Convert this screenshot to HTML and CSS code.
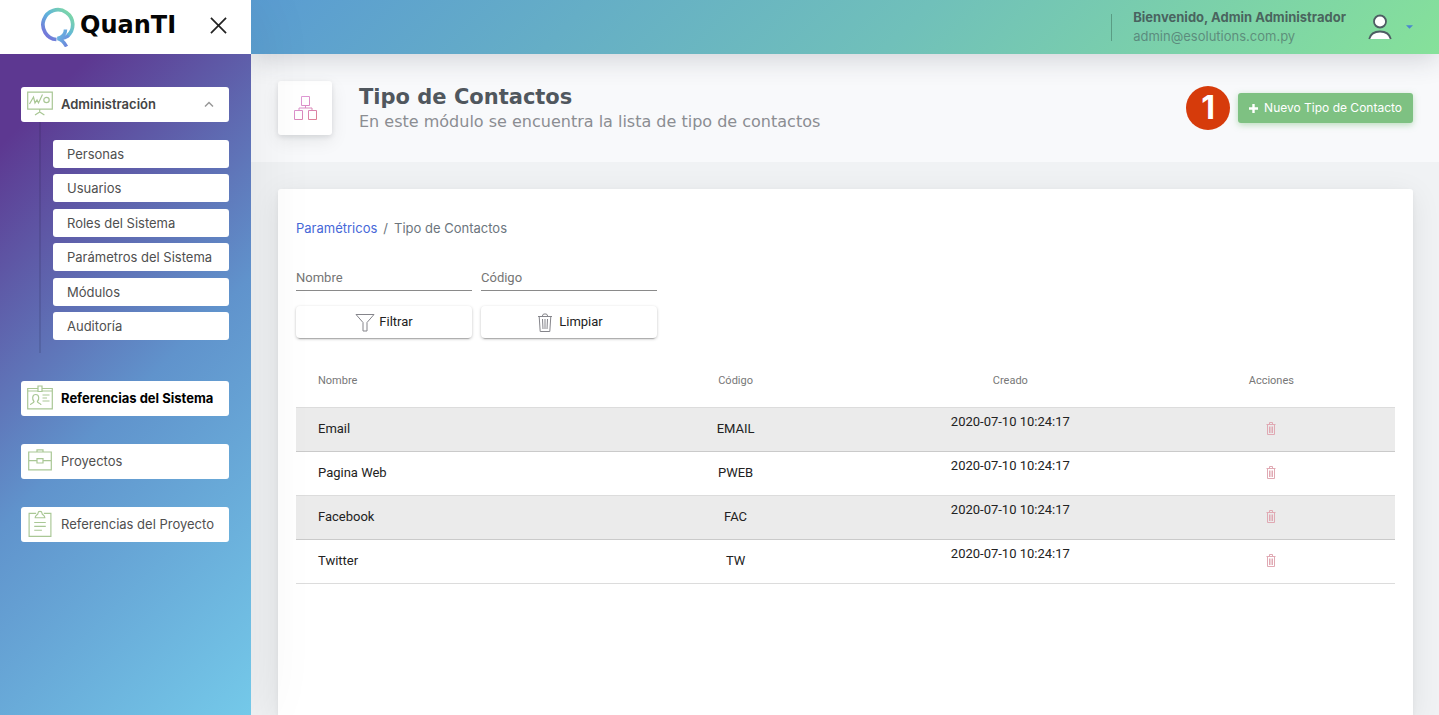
FILE: index.html
```html
<!DOCTYPE html>
<html lang="es">
<head>
<meta charset="utf-8">
<meta name="viewport" content="width=device-width, initial-scale=1">
<title>Tipo de Contactos</title>
<link rel="stylesheet" href="styles.css">
</head>
<body>
<svg class="defs" aria-hidden="true">
  <defs>
    <linearGradient id="logo-ring" x1="0" y1="1" x2="1" y2="0">
      <stop offset="0" stop-color="#7a63d8"/><stop offset=".5" stop-color="#5fb3dc"/><stop offset="1" stop-color="#84e09a"/>
    </linearGradient>
    <linearGradient id="logo-tail" x1="0" y1="0" x2="1" y2="1">
      <stop offset="0" stop-color="#66c3e0"/><stop offset="1" stop-color="#6d80dc"/>
    </linearGradient>
    <linearGradient id="pink" gradientUnits="userSpaceOnUse" x1="0" y1="0" x2="23" y2="24">
      <stop offset="0" stop-color="#e3a4e0"/><stop offset=".5" stop-color="#d98ac4"/><stop offset="1" stop-color="#dd7f90"/>
    </linearGradient>
    <symbol id="trash-small" viewBox="0 0 10 13">
      <path d="M.5 2.5h9M3.5 2.5v-2h3v2M1.5 2.5v10h7v-10M3.5 4.500v6.500M5 4.500v6.500M6.500 4.500v6.500"/>
    </symbol>
  </defs>
</svg>
<div class="app">
  <aside class="sidebar">
    <div class="brand">
      <svg class="brand-mark" viewBox="0 0 36 40" aria-hidden="true">
        <path d="M16.500 32.500A14.900 14.900 0 1 1 27.500 29" fill="none" stroke="url(#logo-ring)" stroke-width="3.700"/>
        <path d="M25.500 22.500C25.500 27 23.500 30 17.500 31.500C20.500 32 24 35 26.500 39.500M18 32C22 31.500 26 31 28.500 28.500" fill="none" stroke="url(#logo-tail)" stroke-width="3.500"/>
      </svg>
      <span class="brand-name">QuanTI</span>
      <button class="close" type="button" aria-label="Cerrar menú">
        <svg viewBox="0 0 18 18"><path d="M1 1l16 16M17 1L1 17"/></svg>
      </button>
    </div>
    <nav class="menu">
      <div>
        <a class="item current" href="#">
          <svg class="item-icon" viewBox="0 0 26 26"><path d="M.7 1.700h24.600v17H.7zM2.500 13.500l4-7 1.500 6 2-3 1.500 3 4-8.500M12.700 19v2.500M8 24.500l4.700-3 4.700 3"/><circle cx="19.500" cy="9.500" r="2.700"/></svg>
          Administración
          <svg class="chevron" viewBox="0 0 10 6"><path d="M1 5.500l4-4 4 4"/></svg>
        </a>
        <ul class="submenu">
          <li><a href="#">Personas</a></li>
          <li><a href="#">Usuarios</a></li>
          <li><a href="#">Roles del Sistema</a></li>
          <li><a href="#">Parámetros del Sistema</a></li>
          <li><a href="#">Módulos</a></li>
          <li><a href="#">Auditoría</a></li>
        </ul>
      </div>
      <a class="item active" href="#">
        <svg class="item-icon" viewBox="0 0 26 26"><path d="M11 4H.7v20.300h24.600V4H15M.7 6.500H11M15 6.500h10.300M11 1.500h4v5.500h-4zM3.500 20.500c0-2 3.500-1.500 3.500-3.500-2-2-2-7 1.700-7s3.700 5 1.700 7c0 2 3.600 1.500 3.600 3.500M15.500 10.500h7M15.500 13.500h4.500M15.500 16.500h7"/></svg>
        Referencias del Sistema
      </a>
      <a class="item" href="#">
        <svg class="item-icon" viewBox="0 0 26 26"><path d="M1.700 4.500h22.600v17.800H1.700zM10 4.500V2.300h6v2.200M1.700 13.200h8.300M16 13.200h8.300M10 11.200h6v4.300h-6z"/></svg>
        Proyectos
      </a>
      <a class="item" href="#">
        <svg class="item-icon" viewBox="0 0 26 28"><path d="M9 3.500H1.700v23.800h22.600V3.500H17M8 8c0-3 3-2.500 3-5 0-2 4-2 4 0 0 2.500 3 2 3 5zM7 13h12M7 17h12M7 21h8"/></svg>
        Referencias del Proyecto
      </a>
    </nav>
  </aside>

  <div class="page">
    <header class="topbar">
      <div class="user">
        <strong>Bienvenido, Admin Administrador</strong>
        <span>admin@esolutions.com.py</span>
      </div>
      <button class="account" type="button" aria-label="Cuenta">
        <svg class="avatar" viewBox="0 0 24 26"><circle cx="12" cy="7.500" r="6"/><path d="M1.200 25c1.300-5 5.800-7.500 10.800-7.500s9.500 2.500 10.800 7.500"/></svg>
        <svg class="caret" viewBox="0 0 8 4"><path d="M0 0h8L4 4z"/></svg>
      </button>
    </header>

    <section class="heading">
      <div class="heading-icon">
        <svg viewBox="0 0 23 24"><path d="M7.500.5h8v9h-8zM.5 14.500h8v9h-8zM14.500 14.500h8v9h-8zM11.500 9.500v2.500M5 14.500V12h13v2.500"/></svg>
      </div>
      <div class="heading-text">
        <h1>Tipo de Contactos</h1>
        <p>En este módulo se encuentra la lista de tipo de contactos</p>
      </div>
      <span class="step">1</span>
      <button class="create" type="button">
        <svg viewBox="0 0 9 9"><path d="M4.500 0v9M0 4.500h9"/></svg>
        Nuevo Tipo de Contacto
      </button>
    </section>

    <main class="card">
      <nav class="crumbs">
        <a href="#">Paramétricos</a><span>/</span><span>Tipo de Contactos</span>
      </nav>
      <form class="filters">
        <input type="text" placeholder="Nombre" aria-label="Nombre">
        <input type="text" placeholder="Código" aria-label="Código">
        <button type="button">
          <svg viewBox="0 0 20 20"><path d="M1 2.500h18l-7 8v8.500h-4v-8.500z"/></svg>
          Filtrar
        </button>
        <button type="button">
          <svg viewBox="0 0 20 20"><path d="M3 4.500h14M7 4.500L8.500 2h3L13 4.500M4.200 4.500l1 15h9.600l1-15M7.500 7l.5 10M10 7v10M12.500 7L12 17"/></svg>
          Limpiar
        </button>
      </form>
      <table class="list">
        <thead>
          <tr><th>Nombre</th><th>Código</th><th>Creado</th><th>Acciones</th></tr>
        </thead>
        <tbody>
          <tr><td>Email</td><td>EMAIL</td><td>2020-07-10 10:24:17</td><td><button type="button" aria-label="Eliminar Email"><svg><use href="#trash-small"/></svg></button></td></tr>
          <tr><td>Pagina Web</td><td>PWEB</td><td>2020-07-10 10:24:17</td><td><button type="button" aria-label="Eliminar Pagina Web"><svg><use href="#trash-small"/></svg></button></td></tr>
          <tr><td>Facebook</td><td>FAC</td><td>2020-07-10 10:24:17</td><td><button type="button" aria-label="Eliminar Facebook"><svg><use href="#trash-small"/></svg></button></td></tr>
          <tr><td>Twitter</td><td>TW</td><td>2020-07-10 10:24:17</td><td><button type="button" aria-label="Eliminar Twitter"><svg><use href="#trash-small"/></svg></button></td></tr>
        </tbody>
      </table>
    </main>
  </div>
</div>
</body>
</html>
```
FILE: styles.css
```css
* { box-sizing: border-box; }
body {
  margin: 0;
  font: 13px/20px Inter, "Liberation Sans", sans-serif;
  color: #495057;
  background: #f0f2f4;
}
a { text-decoration: none; color: inherit; }
button { font: inherit; border: 0; background: none; padding: 0; cursor: pointer; }
svg { display: block; flex: none; fill: none; }
.defs { position: absolute; width: 0; height: 0; }

.app { display: grid; grid-template-columns: 251px 1fr; min-height: 100vh; }

/* Sidebar */
.sidebar {
  display: flex;
  flex-direction: column;
  z-index: 2;
  box-shadow: 7px 0 60px rgba(8, 10, 12, .06);
}
.brand {
  display: flex;
  align-items: center;
  height: 54px;
  padding: 0 24px 4px 40px;
  background: #fff;
}
.brand-mark { width: 36px; height: 40px; margin-top: 4px; }
.brand-name {
  margin-left: 4px;
  font: bold 24px/50px "DejaVu Sans", sans-serif;
  color: #050505;
}
.close { margin-left: auto; }
.close svg { width: 17px; height: 17px; stroke: #222; stroke-width: 1.8; }
.menu {
  flex: 1;
  display: flex;
  flex-direction: column;
  gap: 28px;
  padding: 33px 22px 28px 21px;
  background: linear-gradient(135deg, #5d3891 10%, #6093cc 52%, #74c9e9 100%);
}
.item {
  display: flex;
  align-items: center;
  gap: 8px;
  height: 35px;
  padding: 0 15px 2px 6px;
  border-radius: 3px;
  background: #fff;
  color: #4f4f4f;
  white-space: nowrap;
}
.item.current { font-weight: 600; color: #444; }
.item.active { font-weight: 700; color: #000; }
.item-icon { width: 26px; height: 27px; stroke: #a9c795; stroke-width: 1.2; }
.chevron { width: 10px; height: 6px; margin-left: auto; stroke: #999; stroke-width: 1.5; }
.submenu {
  display: flex;
  flex-direction: column;
  justify-content: space-between;
  height: 231px;
  margin: 0 0 0 18px;
  padding: 18px 0 13px 12px;
  border-left: 2px solid rgba(30, 30, 60, .15);
  list-style: none;
}
.submenu a {
  display: block;
  padding: 4px 14px;
  border-radius: 3px;
  background: #fff;
  color: #4f4f4f;
  white-space: nowrap;
}

/* Top bar */
.page { display: flex; flex-direction: column; min-width: 0; }
.topbar {
  display: flex;
  justify-content: flex-end;
  align-items: center;
  height: 54px;
  padding-right: 26px;
  background: linear-gradient(135deg, #5a9cd2, #70c0ba 55%, #86e19a);
  box-shadow: 0 4px 28px rgba(40, 44, 60, .2);
  z-index: 1;
}
.user {
  display: flex;
  flex-direction: column;
  justify-content: center;
  padding-left: 21px;
  border-left: 1px solid rgba(60, 110, 90, .5);
  height: 27px;
  line-height: 19px;
  white-space: nowrap;
  color: rgba(60, 70, 80, .5);
}
.user strong { color: rgba(60, 70, 75, .8); font-weight: 700; }
.account { display: flex; align-items: center; gap: 14px; margin-left: 22px; }
.avatar { width: 24px; height: 26px; fill: #fff; stroke: #4e5d63; stroke-width: 1.8; }
.caret { width: 7px; height: 4px; fill: #4a86cf; }

/* Page heading */
.heading {
  display: flex;
  align-items: center;
  height: 108px;
  padding: 0 26px 0 27px;
  background: #f8f9fb;
}
.heading-icon {
  display: grid;
  place-items: center;
  width: 54px;
  height: 54px;
  border-radius: 3px;
  background: #fff;
  box-shadow: 0 6px 18px rgba(18, 21, 30, .08), 0 2px 5px rgba(18, 21, 30, .1);
}
.heading-icon svg { width: 23px; height: 24px; stroke: url(#pink); }
.heading-text { flex: 1; padding: 2px 0 0 27px; font-family: "DejaVu Sans", sans-serif; }
.heading-text h1 { margin: 0; font-size: 21px; line-height: 26px; font-weight: 700; color: #50575e; }
.heading-text p { margin: 0; font-size: 16px; line-height: 24px; color: #8b8d92; }
.step {
  display: grid;
  place-items: center;
  width: 44px;
  height: 44px;
  margin-right: 8px;
  border-radius: 50%;
  background: #d63b0b;
  color: #fff;
  font: bold 32px/44px Inter, sans-serif;
}
.create {
  display: flex;
  align-items: center;
  gap: 6px;
  height: 30px;
  padding: 0 11px;
  border-radius: 3px;
  background: #7ec182;
  color: #fff;
  font-size: 12px;
  box-shadow: 0 2px 6px rgba(126, 193, 130, .5);
}
.create svg { width: 9px; height: 9px; stroke: #fff; stroke-width: 2.4; }

/* Card */
.card {
  flex: 1;
  margin: 27px 26px 0 27px;
  padding: 29px 18px;
  border-radius: 3px 3px 0 0;
  background: #fff;
  box-shadow: 0 6px 30px rgba(8, 10, 12, .08), 0 2px 5px rgba(8, 10, 12, .05);
  font-family: Roboto, sans-serif;
  color: #222;
}
.crumbs { display: flex; gap: 6px; font-family: Inter, sans-serif; color: #6c757d; }
.crumbs a { color: #4668d8; }
.filters {
  display: grid;
  grid-template-columns: 176px 176px;
  gap: 15px 9px;
  margin-top: 27px;
}
.filters input {
  width: 100%;
  height: 26px;
  padding: 0;
  border: 0;
  border-bottom: 1px solid #8a8a8a;
  font: 13px Roboto, sans-serif;
  outline: 0;
  background: none;
}
.filters input::placeholder { color: #757575; opacity: 1; }
.filters button {
  display: flex;
  align-items: center;
  justify-content: center;
  gap: 4px;
  height: 32px;
  border-radius: 4px;
  color: #222;
  background: #fff;
  box-shadow: 0 3px 1px -2px rgba(0, 0, 0, .2), 0 1px 3px rgba(0, 0, 0, .25);
}
.filters button svg { width: 20px; height: 20px; stroke: #85858b; }
.list {
  width: 100%;
  margin-top: 18px;
  border-collapse: collapse;
  table-layout: fixed;
}
.list th, .list td { padding: 0; text-align: center; border-bottom: 1px solid #dcdcdc; }
.list th { height: 51px; width: 25%; font-size: 11px; font-weight: 400; color: #777; }
.list th:first-child { width: 27.5%; }
.list th:last-child { width: 22.5%; }
.list th:first-child, .list td:first-child { padding-left: 22px; text-align: left; }
.list td { height: 44px; }
.list td:nth-child(3) { padding-top: 4px; vertical-align: top; }
.list tbody tr:nth-child(odd) { background: #ebebeb; }
.list tbody tr:nth-child(odd) td { border-bottom-color: #cacaca; }
.list td button { display: block; margin: 0 auto; padding-bottom: 2px; }
.list td svg { width: 10px; height: 13px; stroke: #e0a9b3; }
```
